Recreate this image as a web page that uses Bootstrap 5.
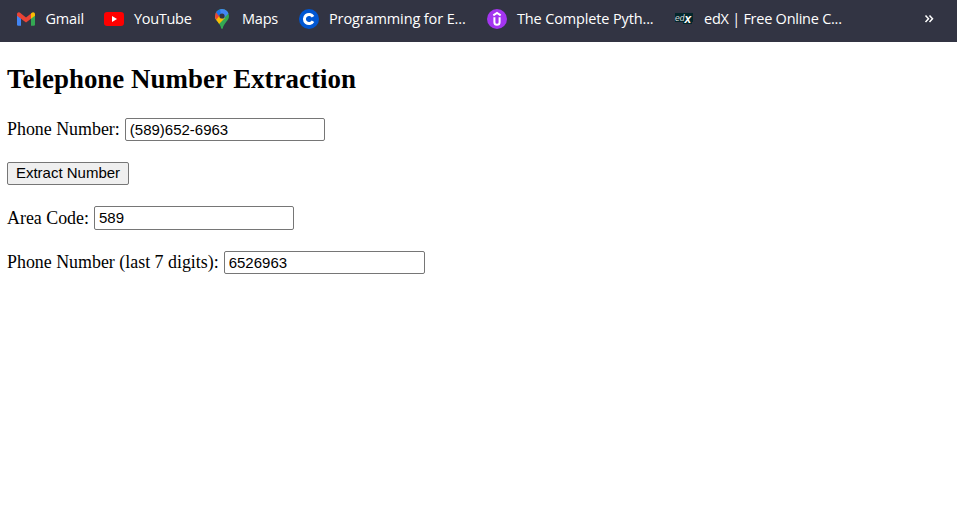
<!DOCTYPE html>
<html lang="en">
<head>
<meta charset="utf-8">
<meta name="viewport" content="width=device-width, initial-scale=1">
<title>Telephone Number Extraction</title>
<link href="https://cdn.jsdelivr.net/npm/bootstrap@5.3.0/dist/css/bootstrap.min.css" rel="stylesheet">
<style>
body{background:#fff;color:#000;font-family:"Liberation Serif","Times New Roman",serif;font-size:17.9px;line-height:20px}
.bookmarks{height:42px;background:#323443;color:#fff;font:14.5px/20px "Open Sans","Segoe UI",sans-serif;padding:9px 0 13px 16px}
.bookmark{gap:9.5px;color:#fff;flex:none}
.bookmark svg{flex:none}
.w-gmail{width:88px}.w-youtube{width:108px}.w-maps{width:87px}.w-course{width:188px}.w-python{width:187px}.w-edx{width:247px}
.w-gmail span,.w-maps span{letter-spacing:-.2px}
.w-youtube,.w-maps,.w-course,.w-python,.w-edx{gap:10px}
.w-youtube span{letter-spacing:-.3px}
.w-course span{letter-spacing:-.12px}
.w-python span{letter-spacing:-.14px}
.w-edx span{letter-spacing:-.25px}
.page{padding:22px 7px 0}
.title{font-size:26.9px;line-height:30px;font-weight:700;margin-bottom:23px;letter-spacing:.03px}
.line{height:24px;margin-bottom:20.4px;gap:5px}
.field{width:200px;height:23px;padding:0 4px;border:1px solid #767676;border-radius:2px;font:15px/20px "Liberation Sans",Arial,sans-serif;color:#000;background:#fff}
.field-area{height:24px}
.field-last{width:201px}
.extract{width:122px;height:23px;padding:0;border:1px solid #767676;border-radius:2px;background:#efefef;font:15px/20px "Liberation Sans",Arial,sans-serif;color:#000}
</style>
<script src="https://cdn.jsdelivr.net/npm/bootstrap@5.3.0/dist/js/bootstrap.bundle.min.js"></script>
</head>
<body>
<nav class="bookmarks d-flex align-items-center text-nowrap">
  <a class="bookmark w-gmail d-flex align-items-center text-decoration-none" href="#">
    <svg width="20" height="20" viewBox="0 0 20 20"><path fill="#4285f4" d="M1 6v9.500q0 1.200 1.200 1.200H5V9.300z"/><path fill="#34a853" d="M15 9.300v7.400h2.800q1.200 0 1.200-1.200V6z"/><path fill="#ea4335" d="M5 4.500l5 3.900 5-3.900v5.200l-5 3.900-5-3.900z"/><path fill="#ea4335" d="M1 5.500C1 3 3.300 2.800 4.500 4l.5.500v5.200L1 6.800z"/><path fill="#fbbc04" d="M19 5.500C19 3 16.700 2.800 15.500 4l-.5.500v5.200l4-2.900z"/></svg><span>Gmail</span></a>
  <a class="bookmark w-youtube d-flex align-items-center text-decoration-none" href="#">
    <svg width="20" height="20" viewBox="0 0 20 20"><rect y="3" width="20" height="14" rx="3.200" fill="#f00"/><path fill="#fff" d="M8 7v6l5-3z"/></svg><span>YouTube</span></a>
  <a class="bookmark w-maps d-flex align-items-center text-decoration-none" href="#">
    <svg width="20" height="20" viewBox="0 0 20 20"><defs><clipPath id="pin"><path d="M10 0a7 7 0 0 1 7 7c0 5-5 6.500-6.200 12.300q-.8 1.400-1.600 0C8 13.500 3 12 3 7a7 7 0 0 1 7-7z"/></clipPath></defs><g clip-path="url(#pin)"><path fill="#34a853" d="M0 0h20v20H0z"/><path fill="#fbbc04" d="M3 7l5-2 5 4-7 7-4-4z"/><path fill="#ea4335" d="M0 7l4-5 5 3-5 6z"/><path fill="#1a73e8" d="M3 2l3-3 5 4-4 4z"/><path fill="#4285f4" d="M8 0h7l2 4-6 6-2-4z"/></g><circle cx="10" cy="7" r="2.600" fill="#323443"/></svg><span>Maps</span></a>
  <a class="bookmark w-course d-flex align-items-center text-decoration-none" href="#">
    <svg width="20" height="20" viewBox="0 0 20 20"><circle cx="10" cy="10" r="10" fill="#0056d2"/><path d="M14 7.700a4.600 4.600 0 1 0 0 4.600" fill="none" stroke="#fff" stroke-width="3"/></svg><span>Programming for E...</span></a>
  <a class="bookmark w-python d-flex align-items-center text-decoration-none" href="#">
    <svg width="20" height="20" viewBox="0 0 20 20"><circle cx="10" cy="10" r="10" fill="#a435f0"/><path d="M6.300 6.300L10 4l3.700 2.300M7.400 8.300v4.900a2.600 2.600 0 0 0 5.200 0V8.300" fill="none" stroke="#fff" stroke-width="2"/></svg><span>The Complete Pyth...</span></a>
  <a class="bookmark w-edx d-flex align-items-center text-decoration-none" href="#">
    <svg width="20" height="20" viewBox="0 0 20 20"><path fill="#04262b" d="M1 4h18v9h-1v2H9v-2H1z"/><text x="1" y="12" fill="#d7dedf" font-family="Liberation Sans" font-size="8.500" font-style="italic">ed</text><text x="10.500" y="14" fill="#fff" font-family="Liberation Sans" font-size="12" font-weight="700" font-style="italic">x</text></svg><span>edX | Free Online C...</span></a>
  <svg width="14" height="12" viewBox="0 0 14 12"><path d="M4.500 2.500l3 3.200-3 3.200M8.500 2.500l3 3.200-3 3.200" fill="none" stroke="#fff" stroke-width="1.500"/></svg>
</nav>
<main class="page">
  <h2 class="title">Telephone Number Extraction</h2>
  <div class="line d-flex align-items-center"><label for="phone">Phone Number:</label><input id="phone" class="field" type="text" value="(589)652-6963"></div>
  <div class="line d-flex align-items-center"><button class="extract" type="button">Extract Number</button></div>
  <div class="line d-flex align-items-center"><label for="area">Area Code:</label><input id="area" class="field field-area" type="text" value="589"></div>
  <div class="line d-flex align-items-center"><label for="last">Phone Number (last 7 digits):</label><input id="last" class="field field-last" type="text" value="6526963"></div>
</main>
</body>
</html>
